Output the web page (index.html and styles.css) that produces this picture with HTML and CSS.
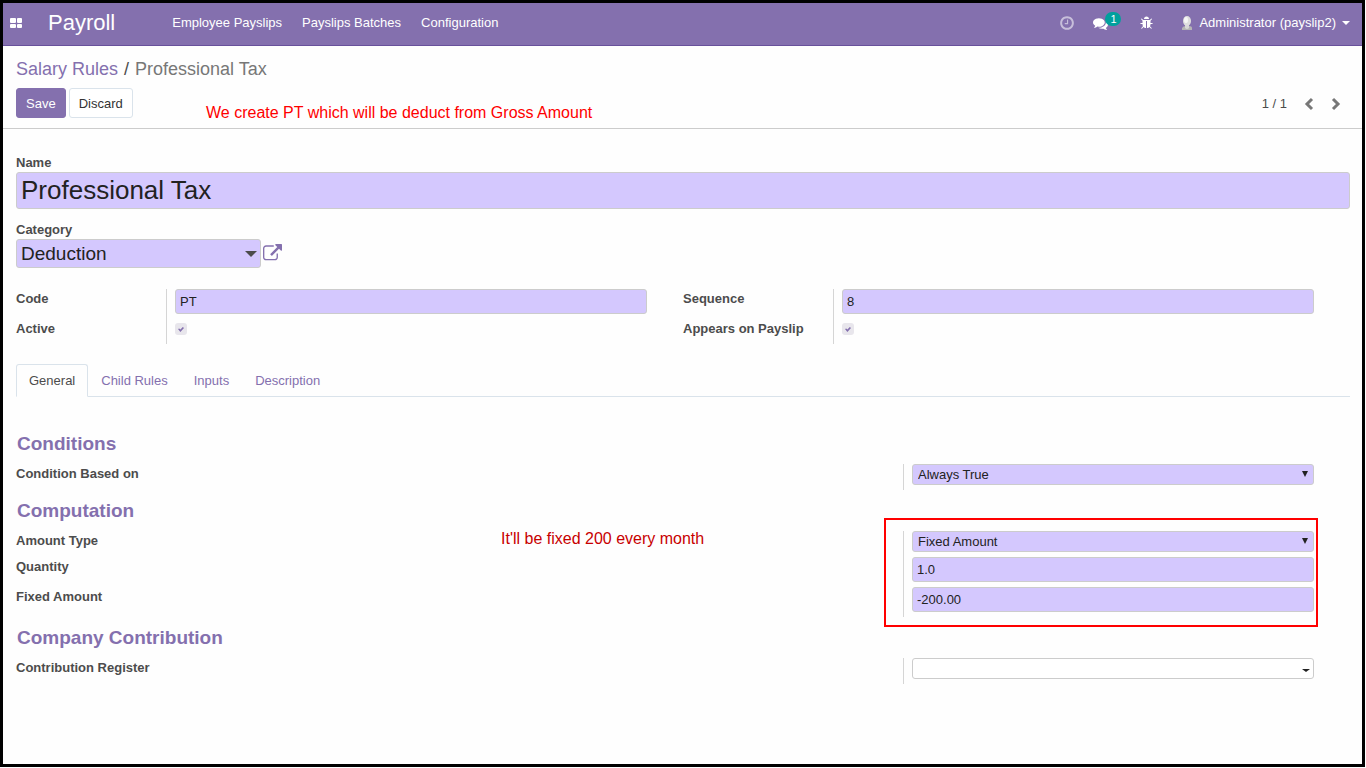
FILE: index.html
```html
<!DOCTYPE html>
<html lang="en">

<head>
  <meta charset="UTF-8" />
  <title>Professional Tax - Payroll</title>
  <meta name="viewport" content="width=device-width, initial-scale=1.0" />
  <link rel="stylesheet" href="styles.css">
</head>

<body>
  <header class="navbar">
    <button type="button" class="nav-icon apps-btn" aria-label="Applications">
      <svg width="12" height="10" viewBox="0 0 12 10"><rect width="6" height="5" rx="1"/><rect x="7" width="5" height="5" rx="1"/><rect y="6" width="6" height="4" rx="1"/><rect x="7" y="6" width="5" height="4" rx="1"/></svg>
    </button>
    <a href="#" class="brand">Payroll</a>
    <nav class="menu">
      <a href="#">Employee Payslips</a>
      <a href="#">Payslips Batches</a>
      <a href="#">Configuration</a>
    </nav>
    <div class="systray">
      <button type="button" class="nav-icon clock-btn" aria-label="Activities">
        <svg width="16" height="16" viewBox="0 0 1792 1792"><path d="M1024 544v448q0 14-9 23t-23 9h-320q-14 0-23-9t-9-23v-64q0-14 9-23t23-9h224v-352q0-14 9-23t23-9h64q14 0 23 9t9 23zm416 352q0-148-73-273t-198-198-273-73-273 73-198 198-73 273 73 273 198 198 273 73 273-73 198-198 73-273zm224 0q0 209-103 385.500t-279.500 279.500-385.500 103-385.500-103-279.500-279.500-103-385.500 103-385.500 279.500-279.500 385.500-103 385.500 103 279.500 279.500 103 385.500z"/></svg>
      </button>
      <button type="button" class="nav-icon chat-btn" aria-label="Messages">
        <svg width="15" height="15" viewBox="0 0 1792 1792"><path d="M1408 768q0 139-94 257t-256.500 186.500-353.500 68.500q-86 0-176-16-124 88-278 128-36 9-86 16h-3q-11 0-20.500-8t-11.500-21q-1-3-1-6.500t.5-6.500 2-6l2.500-5 3.500-5.500 4-5 4.500-5 4-4.500q5-6 23-25t26-29.500 22.500-29 25-38.500 20.500-44q-124-72-195-177t-71-224q0-139 94-257t256.500-186.500 353.500-68.500 353.500 68.500 256.500 186.500 94 257zm384 256q0 120-71 224.500t-195 176.500q10 24 20.500 44t25 38.500 22.500 29 26 29.500 23 25q1 1 4 4.500t4.500 5 4 5 3.500 5.500l2.500 5 2 6 .5 6.500-1 6.500q-3 14-13 22t-22 7q-50-7-86-16-154-40-278-128-90 16-176 16-271 0-472-132 58 4 88 4 161 0 309-45t264-129q125-92 192-212t67-254q0-77-23-152 129 71 204 178t75 230z"/></svg>
        <span class="badge">1</span>
      </button>
      <button type="button" class="nav-icon bug-btn" aria-label="Debug">
        <svg width="14" height="14" viewBox="0 0 1792 1792"><path d="M1632 960q0 26-19 45t-45 19h-224q0 171-67 290l208 209q19 19 19 45t-19 45q-18 19-45 19t-45-19l-198-197q-5 5-15 13t-42 28.500-65 36.500-82 29-97 13v-896h-128v896q-51 0-101.500-13.500t-87-33-66-39-43.500-32.500l-15-14-183 207q-20 21-48 21-24 0-43-16-19-18-20.500-44.500t15.500-46.500l202-227q-58-114-58-274h-224q-26 0-45-19t-19-45 19-45 45-19h224v-294l-173-173q-19-19-19-45t19-45 45-19 45 19l173 173h844l173-173q19-19 45-19t45 19 19 45-19 45l-173 173v294h224q26 0 45 19t19 45zm-480-576h-640q0-133 93.500-226.500t226.500-93.500 226.500 93.500 93.500 226.500z"/></svg>
      </button>
      <button type="button" class="nav-icon user-btn">
        <svg width="12" height="16" viewBox="0 0 12 16"><path d="M1 15v-2q1-2 4-2h3q3 0 3 2v2z" fill="#b5b5b5"/><path d="M4 9h4v4q-2 2-4 0z" fill="#d8d8d8"/><ellipse cx="6" cy="6" rx="4" ry="5" fill="#dedede"/><ellipse cx="5" cy="5" rx="2" ry="3" fill="#f6f6f6"/></svg>
        <span>Administrator (payslip2)</span>
        <svg class="user-caret" width="8" height="4" viewBox="0 0 8 4"><path d="M0 0h8l-4 4z"/></svg>
      </button>
    </div>
  </header>

  <section class="control-panel">
    <div class="breadcrumb">
      <a href="#">Salary Rules</a>
      <span class="sep">/</span>
      <span class="current">Professional Tax</span>
    </div>
    <div class="panel-row">
      <button type="button" class="btn btn-primary">Save</button>
      <button type="button" class="btn btn-default">Discard</button>
      <div class="pager">
        <span>1 / 1</span>
        <button type="button" class="pager-btn" aria-label="Previous"><svg width="10" height="14" viewBox="0 0 10 14"><path d="M8 2L3 7l5 5"/></svg></button>
        <button type="button" class="pager-btn" aria-label="Next"><svg width="10" height="14" viewBox="0 0 10 14"><path d="M2 2l5 5-5 5"/></svg></button>
      </div>
    </div>
    <p class="note note-gross">We create PT which will be deduct from Gross Amount</p>
  </section>

  <main>
    <form>
      <!-- Title fields -->
      <label for="name" class="title-label">Name</label>
      <input type="text" id="name" class="field field-name" value="Professional Tax" />

      <label for="category" class="title-label">Category</label>
      <div class="category-row">
        <div class="select-wrap">
          <select id="category" class="field field-category"><option>Deduction</option></select>
          <svg class="arrow" width="12" height="6" viewBox="0 0 12 6"><path d="M0 0h12L6 6z"/></svg>
        </div>
        <button type="button" class="open-btn" aria-label="Open category">
          <svg width="19" height="19" viewBox="0 0 1792 1792"><path d="M1408 928v320q0 119-84.500 203.500t-203.500 84.500h-832q-119 0-203.500-84.500t-84.500-203.500v-832q0-119 84.500-203.500t203.500-84.500h704q14 0 23 9t9 23v64q0 14-9 23t-23 9h-704q-66 0-113 47t-47 113v832q0 66 47 113t113 47h832q66 0 113-47t47-113v-320q0-14 9-23t23-9h64q14 0 23 9t9 23zm384-864v512q0 26-19 45t-45 19-45-19l-176-176-652 652q-10 10-23 10t-23-10l-114-114q-10-10-10-23t10-23l652-652-176-176q-19-19-19-45t19-45 45-19h512q26 0 45 19t19 45z"/></svg>
        </button>
      </div>

      <div class="columns">
        <div class="group">
          <div class="labels">
            <label for="code" class="tall">Code</label>
            <label for="active" class="short">Active</label>
          </div>
          <div class="values">
            <input type="text" id="code" class="field" value="PT" />
            <input type="checkbox" id="active" checked />
          </div>
        </div>
        <div class="group">
          <div class="labels">
            <label for="sequence" class="tall">Sequence</label>
            <label for="appears" class="short">Appears on Payslip</label>
          </div>
          <div class="values">
            <input type="text" id="sequence" class="field" value="8" />
            <input type="checkbox" id="appears" checked />
          </div>
        </div>
      </div>

      <nav class="tabs">
        <a href="#" class="active">General</a>
        <a href="#">Child Rules</a>
        <a href="#">Inputs</a>
        <a href="#">Description</a>
      </nav>

      <!-- General tab -->
      <div class="tab-pane">
        <h2>Conditions</h2>
        <div class="group wide">
          <div class="labels">
            <label for="condition" class="short">Condition Based on</label>
          </div>
          <div class="values">
            <div class="select-wrap">
              <select id="condition" class="field field-select"><option>Always True</option></select>
              <svg class="arrow" width="6" height="6" viewBox="0 0 6 6"><path d="M0 0h6L3 6z"/></svg>
            </div>
          </div>
        </div>

        <h2>Computation</h2>
        <div class="group wide">
          <div class="labels">
            <label for="amount-type" class="short">Amount Type</label>
            <label for="quantity" class="tall">Quantity</label>
            <label for="fixed" class="tall">Fixed Amount</label>
          </div>
          <div class="values">
            <div class="select-wrap">
              <select id="amount-type" class="field field-select"><option>Fixed Amount</option></select>
              <svg class="arrow" width="6" height="6" viewBox="0 0 6 6"><path d="M0 0h6L3 6z"/></svg>
            </div>
            <input type="text" id="quantity" class="field" value="1.0" />
            <input type="text" id="fixed" class="field" value="-200.00" />
            <div class="highlight"></div>
          </div>
          <p class="note note-fixed">It'll be fixed 200 every month</p>
        </div>

        <h2>Company Contribution</h2>
        <div class="group wide">
          <div class="labels">
            <label for="register" class="short">Contribution Register</label>
          </div>
          <div class="values">
            <div class="select-wrap">
              <select id="register" class="field field-select field-empty"><option></option></select>
              <svg class="arrow arrow-small" width="8" height="3" viewBox="0 0 8 3"><path d="M0 0h8L4 3z"/></svg>
            </div>
          </div>
        </div>
      </div>
    </form>
  </main>
</body>

</html>
```
FILE: styles.css
```css
* {
  box-sizing: border-box;
  margin: 0;
  padding: 0;
}

html {
  background: #fefefe;
}

body {
  margin: 0 1px 1px 0;
  border: 3px solid #000;
  min-height: calc(100vh - 1px);
  background: #fefefe;
  color: #4c4c4c;
  font-family: "Liberation Sans", Arial, sans-serif;
  font-size: 13px;
  line-height: 20px;
}

a {
  color: #8470ae;
  text-decoration: none;
}

button,
input,
select {
  font: inherit;
  color: inherit;
}

button {
  background: none;
  border: none;
  cursor: pointer;
}

svg {
  display: block;
  fill: currentColor;
}

/* Top bar */
.navbar {
  display: flex;
  align-items: center;
  height: 43px;
  padding: 0 12px 2px 7px;
  background: #8470ae;
  border-bottom: 1px solid #68519b;
  color: #fff;
}

.navbar a {
  color: #fff;
}

.brand {
  margin-left: 26px;
  font-size: 22px;
}

.menu {
  display: flex;
  gap: 20px;
  margin-left: 57px;
}

.systray {
  display: flex;
  align-items: center;
  margin-left: auto;
}

.nav-icon {
  display: flex;
  align-items: center;
}

.clock-btn {
  opacity: 0.55;
}

.chat-btn {
  position: relative;
  margin-left: 18px;
}

.badge {
  position: absolute;
  left: 12px;
  top: -4px;
  width: 16px;
  height: 14px;
  border-radius: 7px;
  background: #00a09d;
  font-size: 11px;
  line-height: 14px;
  text-align: center;
}

.bug-btn {
  margin-left: 32px;
}

.user-btn {
  margin-left: 27px;
  gap: 6px;
}

/* Breadcrumb and buttons */
.control-panel {
  position: relative;
  padding: 12px 12px 10px 13px;
  border-bottom: 1px solid #ccc;
}

.breadcrumb {
  display: flex;
  gap: 6px;
  font-size: 18px;
  line-height: 22px;
}

.breadcrumb .current {
  color: #777;
}

.panel-row {
  display: flex;
  align-items: center;
  gap: 3px;
  margin-top: 8px;
}

.btn {
  height: 30px;
  padding: 2px 9px 0;
  border: 1px solid #8470ae;
  border-radius: 3px;
}

.btn-primary {
  background: #8470ae;
  color: #fff;
}

.btn-default {
  background: #fff;
  border-color: #dae3eb;
  color: #333;
}

.pager {
  display: flex;
  align-items: center;
  gap: 17px;
  margin-left: auto;
  padding-top: 1px;
  padding-right: 9px;
}

.pager-btn path {
  fill: none;
  stroke: #777;
  stroke-width: 3;
}

.note {
  position: absolute;
  color: #f00;
  font-size: 16px;
  line-height: 20px;
  white-space: nowrap;
}

.note-gross {
  left: 203px;
  bottom: 5px;
}

.note-fixed {
  left: 485px;
  top: -2px;
  color: #c80000;
}

/* Form */
main {
  padding: 24px 12px 24px 13px;
}

label {
  display: block;
  font-weight: bold;
}

.title-label {
  line-height: 19px;
}

.field {
  display: block;
  width: 100%;
  height: 25px;
  padding: 0 4px;
  border: 1px solid #ccc;
  border-radius: 3px;
  background: #d4c8fe;
  color: #222;
}

.field-name {
  height: 37px;
  margin-bottom: 11px;
  font-size: 26px;
}

select.field {
  appearance: none;
}

.field-category {
  height: 29px;
  font-size: 19px;
}

.field-select {
  height: 21px;
  padding: 0 5px;
  line-height: 19px;
}

.field-empty {
  background: #fff;
}

.category-row {
  display: flex;
  align-items: center;
  gap: 2px;
}

.category-row .select-wrap {
  width: 245px;
}

.open-btn {
  color: #8470ae;
}

.select-wrap {
  position: relative;
}

.arrow {
  position: absolute;
  right: 4px;
  top: 12px;
  pointer-events: none;
}

.values .arrow {
  right: 6px;
  top: 7px;
  color: #222;
}

.values .arrow-small {
  right: 4px;
  top: 11px;
}

.columns {
  display: grid;
  grid-template-columns: 1fr 1fr;
  margin-top: 21px;
}

.group {
  position: relative;
  display: grid;
  grid-template-columns: 150px 1fr;
}

.group.wide {
  grid-template-columns: 1fr 447px;
}

.labels .tall {
  height: 30px;
}

.labels .short {
  height: 25px;
}

.wide .labels .short {
  height: 26px;
}

.values {
  position: relative;
  display: flex;
  flex-direction: column;
  gap: 5px;
  padding: 0 36px 5px 8px;
  border-left: 1px solid #d5d5d5;
}

input[type="checkbox"] {
  appearance: none;
  width: 12px;
  height: 12px;
  margin: 4px 0;
  border-radius: 3px;
  background: #e8e6ec;
}

input[type="checkbox"]:checked::before {
  content: "";
  display: block;
  width: 6px;
  height: 5px;
  margin: 4px 3px;
  background: #8470ae;
  clip-path: polygon(0 40%, 20% 30%, 40% 50%, 80% 0, 100% 20%, 40% 100%);
}

.tabs {
  display: flex;
  margin-top: 20px;
  border-bottom: 1px solid #dae3eb;
}

.tabs a {
  margin-bottom: -1px;
  padding: 6px 12px 5px;
  border: 1px solid transparent;
  border-radius: 3px 3px 0 0;
}

.tabs .active {
  background: #fefefe;
  border-color: #dae3eb;
  border-bottom-color: #fefefe;
  color: #4c4c4c;
}

.tab-pane {
  padding-top: 26px;
}

h2 {
  padding: 9px 1px 8px;
  color: #8470ae;
  font-size: 19px;
  line-height: 24px;
}

/* Red frame round the amount fields */
.highlight {
  position: absolute;
  top: -13px;
  right: 32px;
  bottom: -10px;
  left: -20px;
  border: 2px solid #f00;
  pointer-events: none;
}
```
